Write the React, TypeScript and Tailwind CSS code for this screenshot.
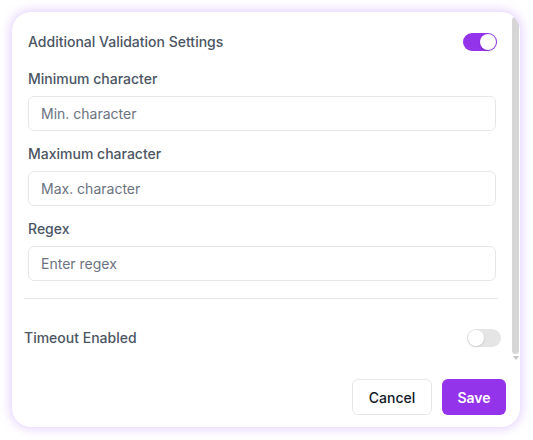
import React, { useState } from 'react';

const Toggle = ({ on, onChange }: { on: boolean; onChange: () => void }) => (
  <button
    onClick={onChange}
    className={`relative h-[18px] w-[34px] rounded-full transition-colors ${on ? 'bg-[#9333ea]' : 'bg-[#e5e5e5]'}`}
  >
    <span
      className={`absolute top-[1px] h-4 w-4 rounded-full bg-white shadow-sm ${on ? 'left-[17px]' : 'left-[1px]'}`}
    />
  </button>
);

const Field = ({ label, placeholder }: { label: string; placeholder: string }) => (
  <div className="flex flex-col gap-[7px]">
    <label className="text-[14px] leading-5 font-medium text-[#4b5563]">{label}</label>
    <input
      placeholder={placeholder}
      className="h-[35px] w-full rounded-md border border-[#e5e7eb] bg-white px-3 text-[14px] text-[#374151] placeholder:text-[#6b7280] focus:outline-none"
    />
  </div>
);

export default function App() {
  const [validation, setValidation] = useState(true);
  const [timeout, setTimeoutOn] = useState(false);

  return (
    <div className="h-[440px] w-[533px] bg-white pl-[11px] pt-[11px]" style={{ fontFamily: 'Inter, "Noto Sans", sans-serif' }}>
      <div className="flex h-[417px] w-[510px] flex-col overflow-hidden rounded-[20px] border border-[#efe4ff] bg-white shadow-[0_0_10px_2px_rgba(192,150,255,0.35)]">
        <div className="relative h-[351px] overflow-hidden">
          <div className="pr-[10px]">
            <div className="flex items-center justify-between pl-4 pr-[13px] pt-[20px]">
              <span className="text-[14px] leading-5 font-medium text-[#4b5563]">Additional Validation Settings</span>
              <Toggle on={validation} onChange={() => setValidation(!validation)} />
            </div>
            <div className="flex flex-col gap-[13px] pl-4 pr-[14px] pt-[17px]">
              <Field label="Minimum character" placeholder="Min. character" />
              <Field label="Maximum character" placeholder="Max. character" />
              <Field label="Regex" placeholder="Enter regex" />
            </div>
            <div className="mx-3 mt-[17px] border-t border-[#e5e7eb]" />
            <div className="flex items-center justify-between pl-3 pr-[9px] pt-[29px]">
              <span className="text-[14px] leading-5 font-medium text-[#4b5563]">Timeout Enabled</span>
              <Toggle on={timeout} onChange={() => setTimeoutOn(!timeout)} />
            </div>
          </div>
          {/* scrollbar */}
          <div className="absolute right-[1px] top-[5px] flex w-[7px] flex-col items-center">
            <div className="h-[337px] w-[7px] rounded-full bg-[#d6d6d6]" />
            <div className="mt-[2px] h-0 w-0 border-x-[3px] border-t-[4px] border-x-transparent border-t-[#c4c4c4]" />
          </div>
        </div>
        <div className="flex justify-end gap-[10px] pr-[14px] pt-[16px]">
          <button className="h-[36px] w-[80px] rounded-md border border-[#e5e7eb] bg-white text-[14px] font-medium text-[#111827]">
            Cancel
          </button>
          <button className="h-[36px] w-[64px] rounded-md bg-[#9333ea] text-[14px] font-semibold text-white">
            Save
          </button>
        </div>
      </div>
    </div>
  );
}
